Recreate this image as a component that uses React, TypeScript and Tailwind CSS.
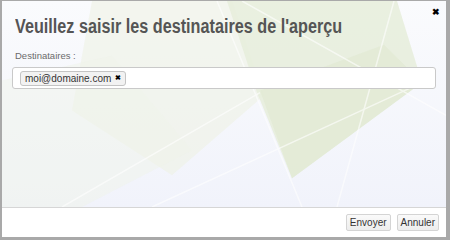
import React from "react";

const font = { fontFamily: '"Liberation Sans", Arial, sans-serif' };

function Backdrop() {
  return (
    <svg
      className="absolute inset-0 h-full w-full"
      viewBox="0 0 444 207"
      preserveAspectRatio="none"
    >
      <defs>
        <linearGradient id="bg" x1="0" y1="0" x2="0" y2="1">
          <stop offset="0" stopColor="#fafbfd" />
          <stop offset="1" stopColor="#f1f3fb" />
        </linearGradient>
      </defs>
      <rect width="444" height="207" fill="url(#bg)" />
      <polygon points="90,0 230,0 262,95 170,175 70,110" fill="#eef2e4" opacity="0.6" />
      <polygon points="225,0 395,0 420,82 290,178 255,92" fill="#e6eddb" opacity="0.85" />
      <polygon points="258,90 382,44 420,82 290,178" fill="#e1e9d3" opacity="0.7" />
      <polygon points="0,80 110,55 190,150 80,207 0,207" fill="#f0f3ea" opacity="0.5" />
      <g stroke="#ffffff" strokeWidth="1.5" opacity="0.6" fill="none">
        <line x1="215" y1="0" x2="300" y2="207" />
        <line x1="150" y1="207" x2="420" y2="82" />
        <line x1="240" y1="0" x2="444" y2="115" />
        <line x1="392" y1="0" x2="335" y2="207" />
        <line x1="60" y1="207" x2="258" y2="92" />
      </g>
    </svg>
  );
}

export default function App() {
  return (
    <div className="w-[450px] h-[240px] bg-[#a9a9a9] pl-[2px] pr-[4px] pt-px pb-[3px]" style={font}>
      <div className="flex h-full flex-col bg-white">
        <div className="relative flex-1 overflow-hidden border-b border-[#d6d6d6]">
          <Backdrop />
          <div className="relative pl-[10px] pr-[10px]">
            <div className="flex items-start justify-between">
              <h1 className="mt-[13px] ml-[3px] origin-left scale-x-[0.81] whitespace-nowrap text-[20px] font-bold leading-[24px] text-[#555555]">
                Veuillez saisir les destinataires de l'aperçu
              </h1>
              <span className="mt-[6px] mr-[-4px] text-[9px] font-bold leading-[10px] text-black">✖</span>
            </div>
            <p className="mt-[12px] ml-[3px] text-[9.5px] leading-[12px] text-[#6b6b6b]">Destinataires :</p>
            <div className="mt-[5px] flex h-[22px] items-center rounded-[3px] border border-[#c9c9c9] bg-white pl-[7px]">
              <span className="flex h-[15px] items-center gap-[4px] rounded-[3px] border border-[#c4c4c4] bg-[#f2f2f2] pl-[4px] pr-[4px] text-[10px] text-[#333333]">
                moi@domaine.com
                <span className="text-[7px] font-bold text-black">✖</span>
              </span>
            </div>
          </div>
        </div>
        <div className="flex h-[29px] items-center justify-end gap-[6px] pr-[7px]">
          <button className="h-[17px] rounded-[2px] border border-[#d4d4d4] bg-gradient-to-b from-[#fafafa] to-[#ededed] px-[3px] text-[10px] leading-[15px] text-[#333333]">
            Envoyer
          </button>
          <button className="h-[17px] rounded-[2px] border border-[#d4d4d4] bg-gradient-to-b from-[#fafafa] to-[#ededed] px-[3px] text-[10px] leading-[15px] text-[#333333]">
            Annuler
          </button>
        </div>
      </div>
    </div>
  );
}
